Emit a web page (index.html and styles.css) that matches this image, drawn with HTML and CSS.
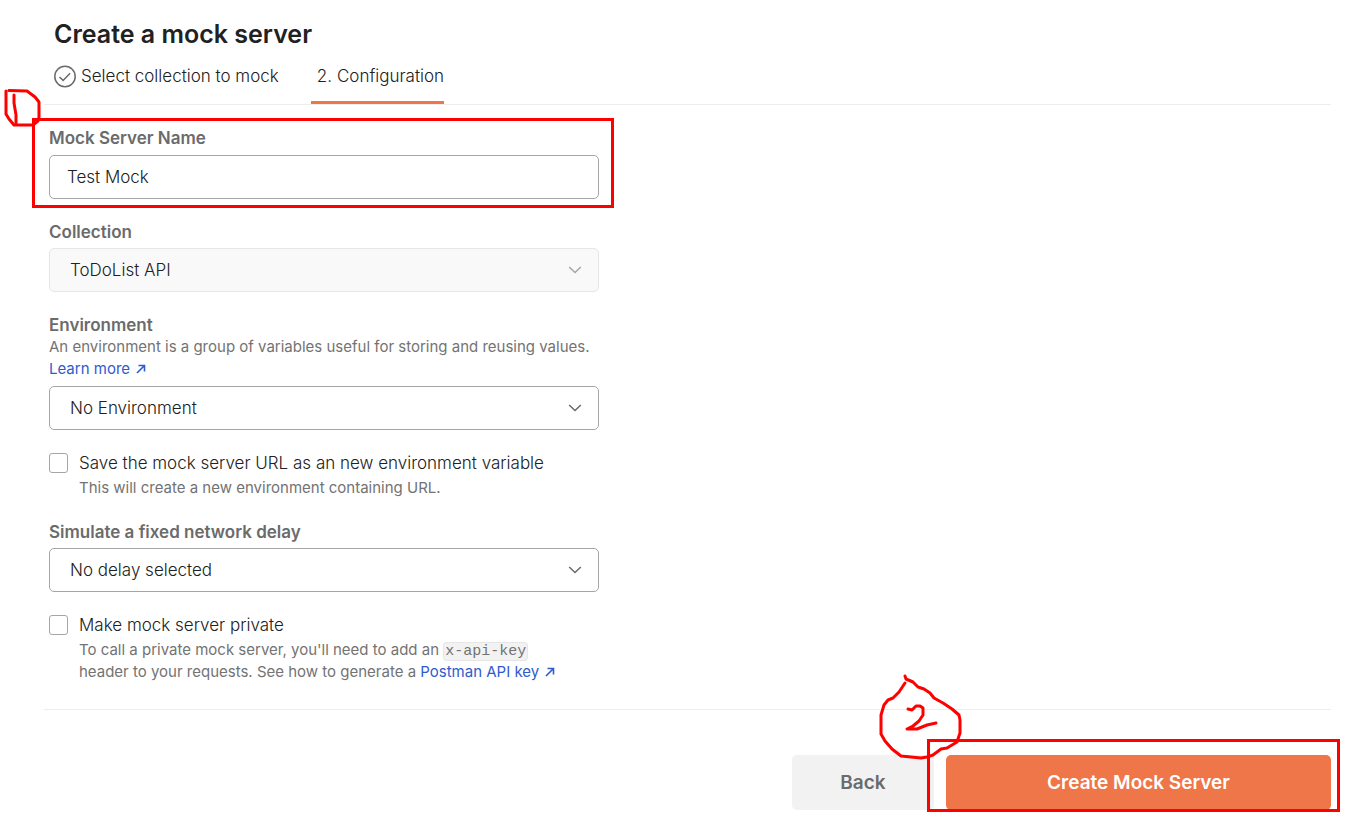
FILE: index.html
```
<!DOCTYPE html>
<html lang="en">
<head>
  <meta charset="UTF-8">
  <meta name="viewport" content="width=device-width, initial-scale=1.0">
  <title>Create a mock server</title>
  <link rel="stylesheet" href="styles.css">
</head>
<body>
  <main class="page">
    <header class="header">
      <h1>Create a mock server</h1>
      <nav class="tabs">
        <a class="tab" href="#">
          <svg class="check-icon" width="22" height="22" viewBox="0 0 22 22">
            <circle cx="11" cy="11.500" r="10.2"/>
            <path d="M5.5 12l3.600 3.400 7-7.200"/>
          </svg>
          <span>Select collection to mock</span>
        </a>
        <a class="tab active" href="#"><span>2.</span><span>Configuration</span></a>
      </nav>
    </header>

    <form class="form">
      <div class="field marked">
        <label for="name">Mock Server Name</label>
        <input type="text" id="name" class="control" value="Test Mock">
        <div class="mark mark-name"></div>
        <svg class="scribble scribble-one" width="44" height="44" viewBox="0 0 44 44">
          <path d="M6 10V33L9 38L14 44H33L38 40L39 36V21L35 16L31 13L27 10L9 9.500"/>
          <path d="M14 14V22L16 34V43"/>
        </svg>
      </div>

      <div class="field">
        <label for="collection">Collection</label>
        <div class="select-wrap">
          <select id="collection" class="control" disabled><option>ToDoList API</option></select>
          <svg class="chevron" width="14" height="8" viewBox="0 0 14 8"><path d="M1.200 1L7 6.500L12.800 1"/></svg>
        </div>
      </div>

      <div class="field">
        <label for="environment">Environment</label>
        <p class="hint">An environment is a group of variables useful for storing and reusing values.
          <a href="#">Learn more <svg class="arrow" width="10" height="10" viewBox="0 0 10 10"><path d="M1 9L8.500 1.500M2.500 1.500H8.500V7.500"/></svg></a>
        </p>
        <div class="select-wrap">
          <select id="environment" class="control"><option>No Environment</option></select>
          <svg class="chevron" width="14" height="8" viewBox="0 0 14 8"><path d="M1.200 1L7 6.500L12.800 1"/></svg>
        </div>
      </div>

      <div class="check-row">
        <input type="checkbox" id="save-url">
        <div class="check-text">
          <label for="save-url">Save the mock server URL as an new environment variable</label>
          <p class="hint">This will create a new environment containing URL.</p>
        </div>
      </div>

      <div class="field">
        <label for="delay">Simulate a fixed network delay</label>
        <div class="select-wrap">
          <select id="delay" class="control"><option>No delay selected</option></select>
          <svg class="chevron" width="14" height="8" viewBox="0 0 14 8"><path d="M1.200 1L7 6.500L12.800 1"/></svg>
        </div>
      </div>

      <div class="check-row">
        <input type="checkbox" id="private">
        <div class="check-text">
          <label for="private">Make mock server private</label>
          <p class="hint">To call a private mock server, you'll need to add an <code>x-api-key</code><br>
            header to your requests. See how to generate a
            <a href="#">Postman API key <svg class="arrow" width="10" height="10" viewBox="0 0 10 10"><path d="M1 9L8.500 1.500M2.500 1.500H8.500V7.500"/></svg></a>
          </p>
        </div>
      </div>
    </form>

    <footer class="actions">
      <button type="button" class="btn btn-back">Back</button>
      <div class="marked">
        <button type="submit" class="btn btn-create">Create Mock Server</button>
        <div class="mark mark-create"></div>
        <svg class="scribble scribble-two" width="90" height="86" viewBox="0 0 90 86">
          <path d="M31 4L32 7L39 10L44 15L50 17L56 21L60 26L69 31L78 37L85 43L86 48V61L83 70L73 76L67 77L59 83L53 85L47 86L27 84L18 77L11 69L7 62V43L10 33L14 28L19 26L25 20L31 11"/>
          <path d="M34 37L38 38L42 34L46 34L49 36V43L45 49L39 54L33 57H43L53 53L62 51"/>
        </svg>
      </div>
    </footer>
  </main>
</body>
</html>
```
FILE: styles.css
```
:root {
  --text: #212121;
  --muted: #6b6b6b;
  --border: #a6a6a6;
  --line: #ededed;
  --orange: #ef7648;
  --link: #2f5bcf;
  --mark: #ff0000;
}

* {
  box-sizing: border-box;
}

body {
  margin: 0;
  background: #fff;
  color: var(--text);
  font-family: Inter, "Liberation Sans", sans-serif;
  font-size: 17px;
  font-weight: 300;
  line-height: 22px;
}

.page {
  padding: 18px 23px 12px 44px;
}

.header {
  padding-left: 10px;
  border-bottom: 1px solid var(--line);
}

h1 {
  margin: 0;
  font-size: 25px;
  font-weight: 600;
  line-height: 32px;
}

.tabs {
  display: flex;
  gap: 32px;
  height: 54px;
}

.tab {
  display: flex;
  align-items: center;
  gap: 5px;
  padding-bottom: 2px;
  color: var(--text);
  text-decoration: none;
}

.tab.active {
  padding: 3px 0 2px 6px;
  border-bottom: 3px solid var(--orange);
}

.check-icon {
  fill: none;
  stroke: var(--muted);
  stroke-width: 1.5;
  overflow: visible;
}

.form {
  display: flex;
  flex-direction: column;
  gap: 22px;
  max-width: 555px;
  padding: 22px 0 26px 5px;
}

.field {
  display: flex;
  flex-direction: column;
}

.field > label {
  color: var(--muted);
  font-weight: 600;
}

.control {
  width: 100%;
  height: 44px;
  margin-top: 6px;
  padding: 0 17px;
  border: 1px solid var(--border);
  border-radius: 5px;
  background: #fff;
  color: var(--text);
  font: inherit;
}

.select-wrap {
  position: relative;
}

select.control {
  display: block;
  appearance: none;
  margin-top: 5px;
  padding: 0 20px;
}

select.control:disabled {
  border-color: #e6e6e6;
  background: #f9f9f9;
  opacity: 1;
}

.chevron {
  position: absolute;
  right: 17px;
  bottom: 18px;
  fill: none;
  stroke: var(--muted);
  stroke-width: 1.5;
  pointer-events: none;
}

select:disabled + .chevron {
  stroke: var(--border);
}

.hint {
  margin: 0;
  color: #737373;
  font-size: 15px;
  font-weight: 400;
}

.field .hint {
  padding-bottom: 1px;
}

.hint a {
  color: var(--link);
  text-decoration: none;
  white-space: nowrap;
}

.arrow {
  margin-left: 2px;
  fill: none;
  stroke: var(--link);
  stroke-width: 1.6;
}

.check-row {
  display: flex;
  gap: 11px;
}

.check-row input {
  appearance: none;
  flex: none;
  width: 19px;
  height: 20px;
  margin: 1px 0 0;
  border: 1px solid var(--border);
  border-radius: 3px;
}

.check-text label {
  display: block;
  margin-bottom: 3px;
}

code {
  padding: 0 1px;
  border: 1px solid #e6e6e6;
  border-radius: 4px;
  background: #f2f2f2;
  font-family: "Liberation Mono", monospace;
  font-size: 15px;
  line-height: 1;
}

.actions {
  display: flex;
  justify-content: flex-end;
  gap: 12px;
  padding-top: 45px;
  border-top: 1px solid var(--line);
}

.btn {
  height: 55px;
  border: none;
  border-radius: 5px;
  font: inherit;
  font-size: 19px;
  font-weight: 600;
  cursor: pointer;
}

.btn-back {
  width: 142px;
  background: #f2f2f2;
  color: var(--muted);
}

.btn-create {
  display: block;
  width: 385px;
  background: var(--orange);
  color: #fff;
}

/* hand-drawn step markers */
.marked {
  position: relative;
}

.mark {
  position: absolute;
  border: 3px solid var(--mark);
  pointer-events: none;
}

.mark-name {
  inset: -9px -15px -9px -17px;
}

.mark-create {
  inset: -16px -9px -2px -19px;
}

.scribble {
  position: absolute;
  fill: none;
  stroke: var(--mark);
  stroke-width: 3;
  stroke-linecap: round;
  stroke-linejoin: round;
  overflow: visible;
  pointer-events: none;
}

.scribble-one {
  top: -46px;
  left: -49px;
}

.scribble-two {
  top: -83px;
  left: -72px;
}
```
